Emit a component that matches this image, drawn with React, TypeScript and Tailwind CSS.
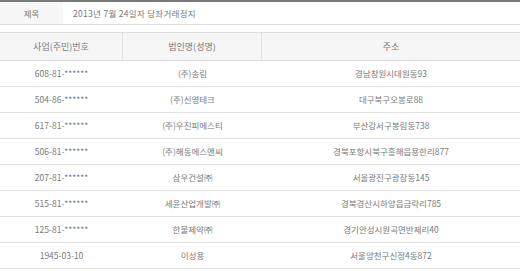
const rows = [
  { no: "608-81-******", name: "(주)송림", addr: "경남창원시대원동93" },
  { no: "504-86-******", name: "(주)신영테크", addr: "대구북구오봉로88" },
  { no: "617-81-******", name: "(주)우진피에스티", addr: "부산강서구봉림동738" },
  { no: "506-81-******", name: "(주)해동에스앤씨", addr: "경북포항시북구흥해읍용한리877" },
  { no: "207-81-******", name: "삼우건설㈜", addr: "서울광진구광장동145" },
  { no: "515-81-******", name: "세윤산업개발㈜", addr: "경북경산시하양읍금락리785" },
  { no: "125-81-******", name: "한불제약㈜", addr: "경기안성시원곡면반제리40" },
  { no: "1945-03-10", name: "이성용", addr: "서울양천구신정4동872" },
]

export default function App() {
  return (
    <div
      className="w-[520px] h-[271px] bg-white text-[8.5px] text-[#7a7a7a] overflow-hidden"
      style={{ fontFamily: '"Noto Sans CJK KR", "Noto Sans", sans-serif' }}
    >
      <div className="flex h-[25px] border-t-2 border-t-[#7a7a7a] border-b border-b-[#ddd]">
        <div className="w-[63px] bg-[#f7f7f7] flex items-center justify-center">제목</div>
        <div className="flex-1 flex items-center pl-[10px] tracking-[0.3px]">2013년 7월 24일자 당좌거래정지</div>
      </div>

      <div className="mt-[7px]">
        <div className="flex h-[29px] bg-[#f6f6f6] border-y border-[#ddd] text-[9px]">
          <div className="w-[123px] flex items-center justify-center border-r border-[#e2e2e2]">사업(주민)번호</div>
          <div className="w-[139px] flex items-center justify-center border-r border-[#e2e2e2]">법인명(성명)</div>
          <div className="flex-1 flex items-center justify-center">주소</div>
        </div>
        {rows.map((r) => (
          <div key={r.no + r.name} className="flex h-[26px] border-b border-[#e2e2e2]">
            <div className="w-[123px] flex items-center justify-center">{r.no}</div>
            <div className="w-[139px] flex items-center justify-center">{r.name}</div>
            <div className="flex-1 flex items-center justify-center">{r.addr}</div>
          </div>
        ))}
      </div>
    </div>
  )
}
